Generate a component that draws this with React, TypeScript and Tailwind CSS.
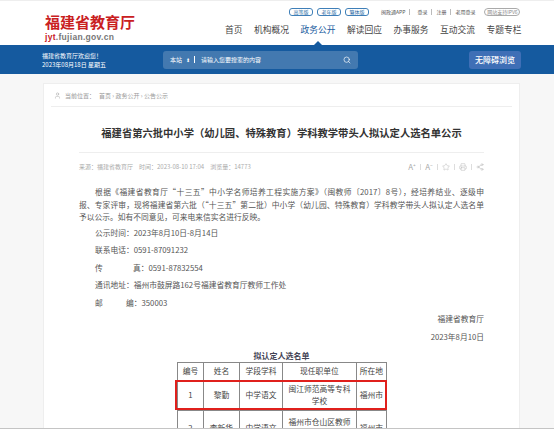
import React from 'react';
import { Search, Star, Printer, Share2, User } from 'lucide-react';

const cjk = { fontFamily: '"Noto Sans CJK SC", "Liberation Sans", sans-serif' };

const navItems = ['首页', '机构概况', '政务公开', '解读回应', '办事服务', '互动交流', '专题专栏'];
const pills = ['高等版', '老年版', '繁体版'];

const infoRows = [
  { label: '公示时间：', value: '2023年8月10日-8月14日' },
  { label: '联系电话：', value: '0591-87091232' },
];

const App: React.FC = () => {
  return (
    <div className="relative h-[429px] w-[554px] overflow-hidden bg-[#f7f7f7] text-[#444]" style={cjk}>
      {/* Header */}
      <header className="h-[45px] border-t border-[#eee] bg-white">
        <div className="flex h-full pl-[45px]">
          <div className="w-[178px] shrink-0 pt-[12px]">
            <div className="text-[15px] leading-[17px] font-bold text-[#c9201f]" style={{ fontFamily: '"Noto Sans CJK SC", serif' }}>
              福建省教育厅
            </div>
            <div className="mt-[2px] font-['Liberation_Sans',sans-serif] text-[8.5px] leading-[10px] font-bold tracking-[0.3px] text-[#777]">
              <span className="text-[#c9201f]">jyt</span>.fujian.gov.cn
            </div>
          </div>
          <div className="flex-1">
            <div className="flex h-[21px] items-center pl-[66px] text-[5px] whitespace-nowrap text-[#555]">
              <div className="flex gap-[4px]">
                {pills.map((p) => (
                  <span key={p} className="flex h-[8px] w-[24px] items-center justify-center rounded-[3px] border border-[#3f7fb8] text-[#2a6aa5]">
                    {p}
                  </span>
                ))}
              </div>
              <span className="ml-[12px]">闽政通APP</span>
              <span className="mx-[4px] h-[6px] w-px bg-[#bbb]" />
              <span className="ml-[3px]">登录</span>
              <span className="mx-[4px] h-[6px] w-px bg-[#bbb]" />
              <span>注册</span>
              <span className="mx-[4px] h-[6px] w-px bg-[#bbb]" />
              <span>老用登录</span>
              <span className="ml-[9px] flex h-[8px] w-[36px] items-center justify-center rounded-full border border-[#aaa] text-[#888]">网站支持IPV6</span>
            </div>
            <nav className="relative flex h-[23px] items-center gap-[11.5px] pb-[7px] pl-[2px] text-[8.75px] leading-none whitespace-nowrap text-[#444]">
              {navItems.map((n) => (
                <span key={n} className={n === '政务公开' ? 'text-[#1a5c9e]' : ''}>
                  {n}
                </span>
              ))}
              <span className="absolute bottom-0 left-[91px] h-0 w-0 border-x-[4px] border-b-[4px] border-x-transparent border-b-[#155a9f]" />
            </nav>
          </div>
        </div>
      </header>

      {/* Blue bar */}
      <div className="flex h-[29px] items-center bg-[#155a9f] pl-[42px] text-white">
        <div className="w-[121px] shrink-0 text-[6px] leading-[9px]">
          <div>福建省教育厅欢迎您！</div>
          <div>2023年08月18日 星期五</div>
        </div>
        <div className="flex h-[18px] w-[195px] shrink-0 items-center rounded-[3px] bg-[#4379b0] pl-[7px] pr-[7px] text-[6px]">
          <span>本站</span>
          <span className="ml-[4px] text-[5px]">⬍</span>
          <span className="ml-[4px] mr-[6px] h-[7px] w-px bg-white" />
          <span className="flex-1">请输入您要搜索的内容</span>
          <Search size={8} strokeWidth={2} />
        </div>
        <div className="ml-[111px] flex h-[18px] w-[52px] shrink-0 items-center justify-center rounded-[3px] bg-[#3f6fb6] text-[8px] font-medium">
          无障碍浏览
        </div>
      </div>

      {/* Article card */}
      <main className="mx-[43px] mt-[9px] h-[346px] w-[477px] border border-[#eee] bg-white px-[7px]">
        <div className="flex h-[23px] items-center gap-[3px] border-b border-[#eee] pl-[3px] text-[6px] text-[#999]">
          <User size={7} strokeWidth={1.5} className="mr-[1px]" />
          <span>当前位置：</span>
          <span className="ml-[1px]">首页 › 政务公开 › 公告公示</span>
        </div>

        <h1 className="mt-[19px] text-center text-[10.3px] leading-[14px] font-bold text-[#333]">
          福建省第六批中小学（幼儿园、特殊教育）学科教学带头人拟认定人选名单公示
        </h1>

        <div className="mx-[28px] mt-[12px] flex h-[22px] items-center justify-between border-t border-[#eee] pt-[6px] text-[6px] text-[#aaa]">
          <div className="flex gap-[6px]">
            <span>来源：福建省教育厅</span>
            <span>时间：2023-08-10 17:04</span>
            <span>浏览量：14773</span>
          </div>
          <div className="flex items-center gap-[4px] text-[#aaa]">
            <span className="text-[8px]">A⁺</span>
            <span className="h-[6px] w-px bg-[#ddd]" />
            <span className="text-[8px]">A⁻</span>
            <span className="h-[6px] w-px bg-[#ddd]" />
            <Star size={8} strokeWidth={1.2} />
            <span className="h-[6px] w-px bg-[#ddd]" />
            <Printer size={8} strokeWidth={1.2} />
            <span className="h-[6px] w-px bg-[#ddd]" />
            <Share2 size={8} strokeWidth={1.2} />
          </div>
        </div>

        {/* Body */}
        <div className="mx-[28px] mt-[12px] text-[7.75px] leading-[12.5px] text-[#555]">
          <div className="indent-[16px] [text-align-last:justify]">
            根据《福建省教育厅“十三五”中小学名师培养工程实施方案》（闽教师〔2017〕8号），经培养结业、逐级申
          </div>
          <div className="[text-align-last:justify]">
            报、专家评审，现将福建省第六批（“十三五”第二批）中小学（幼儿园、特殊教育）学科教学带头人拟认定人选名单
          </div>
          <div>予以公示。如有不同意见，可来电来信实名进行反映。</div>
          <div className="mt-[3px] flex flex-col gap-[5px] pl-[16px]">
            {infoRows.map((r) => (
              <div key={r.label}>
                {r.label}
                {r.value}
              </div>
            ))}
            <div className="flex">
              <span className="w-[38px]">传</span>
              <span>真：0591-87832554</span>
            </div>
            <div>通讯地址：福州市鼓屏路162号福建省教育厅教师工作处</div>
            <div className="flex">
              <span className="w-[31px]">邮</span>
              <span>编：350003</span>
            </div>
          </div>
          <div className="mt-[4px] text-right">福建省教育厅</div>
          <div className="mt-[5.5px] text-right">2023年8月10日</div>
        </div>

        {/* Table */}
        <div className="mt-[6px] text-center text-[8px] leading-[12px] font-bold text-[#445]">拟认定人选名单</div>
        <div className="relative ml-[126px] w-[209px]">
          <table className="w-full table-fixed border-collapse border border-[#888] text-center text-[7.75px] leading-[12.5px] text-[#444]">
            <colgroup>
              <col className="w-[26px]" />
              <col className="w-[36px]" />
              <col className="w-[43px]" />
              <col className="w-[74px]" />
              <col className="w-[30px]" />
            </colgroup>
            <tbody>
              <tr className="h-[18px]">
                {['编号', '姓名', '学段学科', '现任职单位', '所在地'].map((h) => (
                  <td key={h} className="border border-[#888]">{h}</td>
                ))}
              </tr>
              <tr className="h-[30px]">
                <td className="border border-[#888]">1</td>
                <td className="border border-[#888]">黎勤</td>
                <td className="border border-[#888]">中学语文</td>
                <td className="border border-[#888] px-[4px]">闽江师范高等专科学校</td>
                <td className="border border-[#888]">福州市</td>
              </tr>
              <tr className="h-[36px]">
                <td className="border border-[#888]">2</td>
                <td className="border border-[#888]">李新华</td>
                <td className="border border-[#888]">中学语文</td>
                <td className="border border-[#888] px-[4px]">福州市仓山区教师进修学校</td>
                <td className="border border-[#888]">福州市</td>
              </tr>
            </tbody>
          </table>
          {/* red highlight over the first row */}
          <div className="absolute top-[18px] -left-[2px] h-[30px] w-[212px] border-2 border-[#e0201c]" />
        </div>
      </main>

      {/* hairline along the window's bottom edge */}
      <div className="absolute inset-x-0 bottom-0 h-px bg-[#c4c4c4]" />
    </div>
  );
};

export default App;
